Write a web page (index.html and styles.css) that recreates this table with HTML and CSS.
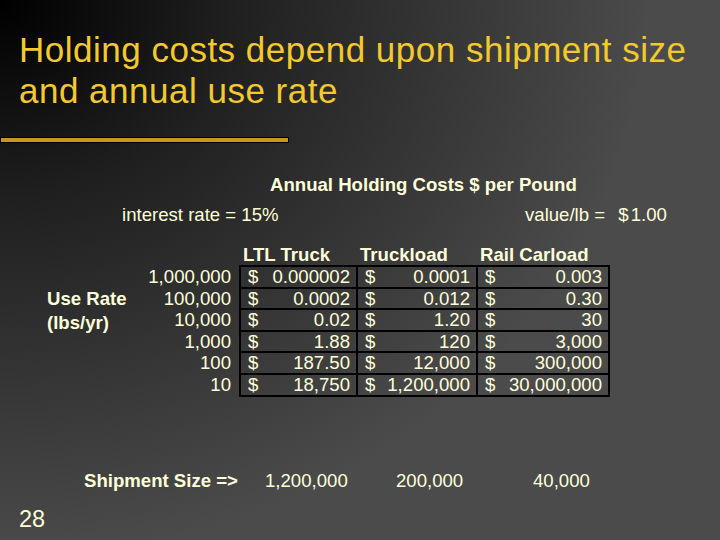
FILE: index.html
```html
<!DOCTYPE html>
<html>
<head>
<meta charset="utf-8">
<link rel="stylesheet" href="styles.css">
</head>
<body>
<div class="slide">
  <h1 class="title">Holding costs depend upon shipment size<br>and annual use rate</h1>
  <div class="bar"></div>
  <div class="caption">Annual Holding Costs $ per Pound</div>
  <div class="params">
    <span>interest rate = 15%</span>
    <span>value/lb = <span class="cur">$</span>1.00</span>
  </div>
  <table class="grid">
    <colgroup>
      <col class="c-lbl"><col class="c-num"><col class="c-a"><col class="c-b"><col class="c-c">
    </colgroup>
    <tr class="hdr">
      <td></td><td></td><th>LTL Truck</th><th>Truckload</th><th>Rail Carload</th>
    </tr>
    <tr>
      <td></td><td class="num">1,000,000</td>
      <td class="cell"><div class="v"><span>$</span><span>0.000002</span></div></td>
      <td class="cell"><div class="v"><span>$</span><span>0.0001</span></div></td>
      <td class="cell"><div class="v"><span>$</span><span>0.003</span></div></td>
    </tr>
    <tr>
      <td class="lbl">Use Rate</td><td class="num">100,000</td>
      <td class="cell"><div class="v"><span>$</span><span>0.0002</span></div></td>
      <td class="cell"><div class="v"><span>$</span><span>0.012</span></div></td>
      <td class="cell"><div class="v"><span>$</span><span>0.30</span></div></td>
    </tr>
    <tr>
      <td class="lbl lbl2">(lbs/yr)</td><td class="num">10,000</td>
      <td class="cell"><div class="v"><span>$</span><span>0.02</span></div></td>
      <td class="cell"><div class="v"><span>$</span><span>1.20</span></div></td>
      <td class="cell"><div class="v"><span>$</span><span>30</span></div></td>
    </tr>
    <tr>
      <td></td><td class="num">1,000</td>
      <td class="cell"><div class="v"><span>$</span><span>1.88</span></div></td>
      <td class="cell"><div class="v"><span>$</span><span>120</span></div></td>
      <td class="cell"><div class="v"><span>$</span><span>3,000</span></div></td>
    </tr>
    <tr>
      <td></td><td class="num">100</td>
      <td class="cell"><div class="v"><span>$</span><span>187.50</span></div></td>
      <td class="cell"><div class="v"><span>$</span><span>12,000</span></div></td>
      <td class="cell"><div class="v"><span>$</span><span>300,000</span></div></td>
    </tr>
    <tr>
      <td></td><td class="num">10</td>
      <td class="cell"><div class="v"><span>$</span><span>18,750</span></div></td>
      <td class="cell"><div class="v"><span>$</span><span>1,200,000</span></div></td>
      <td class="cell"><div class="v"><span>$</span><span>30,000,000</span></div></td>
    </tr>
  </table>
  <div class="ship">
    <span class="ship-lbl">Shipment Size =&gt;</span>
    <span>1,200,000</span>
    <span>200,000</span>
    <span>40,000</span>
  </div>
  <div class="page">28</div>
</div>
</body>
</html>
```

FILE: styles.css
```css
html, body {
  margin: 0;
  padding: 0;
  background: #4b4b4b;
}

.slide {
  width: 720px;
  height: 540px;
  overflow: hidden;
  background: radial-gradient(ellipse 650px 560px at 0 0, #000 0%, #1f1f1f 35%, #4b4b4b 100%);
  font-family: "Liberation Sans", Arial, sans-serif;
  color: #ffffd9;
  font-size: 18.6px;
}

.title {
  margin: 0;
  padding: 29px 0 0 19px;
  font-size: 35px;
  font-weight: normal;
  line-height: 41px;
  letter-spacing: 0.5px;
  color: #f3c92e;
}

.bar {
  margin-top: 26px;
  width: 287px;
  height: 4px;
  background: #c9971c;
  border: 1px solid #000;
}

.caption {
  margin-top: 31px;
  padding-left: 270px;
  font-weight: bold;
  line-height: 22px;
}

.params {
  margin-top: 8px;
  padding-left: 122px;
  display: grid;
  grid-template-columns: 403px auto;
  line-height: 22px;
}

.cur {
  margin-left: 8px;
  margin-right: 2px;
}

.grid {
  margin-top: 19px;
  margin-left: 47px;
  border-collapse: collapse;
  table-layout: fixed;
  width: 562px;
}

.c-lbl { width: 100px; }
.c-num { width: 93px; }
.c-a { width: 117px; }
.c-b { width: 120px; }
.c-c { width: 132px; }

.grid td, .grid th {
  padding: 0;
  line-height: 19.6px;
  white-space: nowrap;
}

.hdr th {
  text-align: left;
  font-weight: bold;
  padding-left: 3px;
  line-height: 20px;
}

.num {
  text-align: right;
  padding-right: 8px !important;
}

.lbl {
  font-weight: bold;
  vertical-align: middle;
}

.lbl2 {
  position: relative;
  top: 3px;
}

.cell {
  border: 2px solid #000;
}

.v {
  display: flex;
  justify-content: space-between;
  padding: 0 6px 0 7px;
}

.ship {
  margin-top: 73px;
  padding-left: 84px;
  display: grid;
  grid-template-columns: 181px 131px 137px auto;
  line-height: 22px;
}

.ship-lbl {
  font-weight: bold;
}

.page {
  margin-top: 14px;
  padding-left: 19px;
  font-size: 23.5px;
  line-height: 26px;
}
```
